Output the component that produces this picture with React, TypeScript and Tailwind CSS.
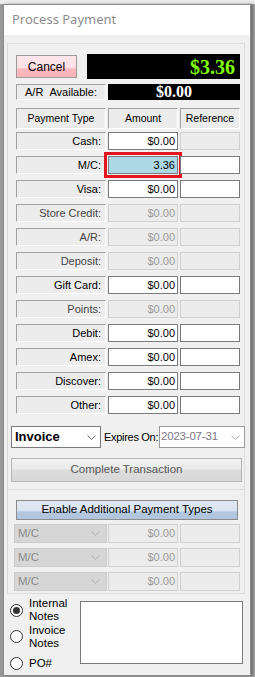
import React from 'react';

type Row = { label: string; amt: string; amtOn: boolean; refOn: boolean; focus?: boolean };

const rows: Row[] = [
  { label: 'Cash:', amt: '$0.00', amtOn: true, refOn: false },
  { label: 'M/C:', amt: '3.36', amtOn: true, refOn: true, focus: true },
  { label: 'Visa:', amt: '$0.00', amtOn: true, refOn: true },
  { label: 'Store Credit:', amt: '$0.00', amtOn: false, refOn: false },
  { label: 'A/R:', amt: '$0.00', amtOn: false, refOn: false },
  { label: 'Deposit:', amt: '$0.00', amtOn: false, refOn: false },
  { label: 'Gift Card:', amt: '$0.00', amtOn: true, refOn: true },
  { label: 'Points:', amt: '$0.00', amtOn: false, refOn: false },
  { label: 'Debit:', amt: '$0.00', amtOn: true, refOn: true },
  { label: 'Amex:', amt: '$0.00', amtOn: true, refOn: true },
  { label: 'Discover:', amt: '$0.00', amtOn: true, refOn: true },
  { label: 'Other:', amt: '$0.00', amtOn: true, refOn: true },
];

const Chevron = ({ color }: { color: string }) => (
  <svg width="9" height="5" viewBox="0 0 9 5" className="shrink-0">
    <polyline points="0.5,0.5 4.5,4.5 8.5,0.5" fill="none" stroke={color} strokeWidth="1" />
  </svg>
);

const Radio = ({ checked }: { checked?: boolean }) => (
  <div className="w-[13px] h-[13px] rounded-full border border-[#333] bg-white flex items-center justify-center shrink-0">
    {checked && <div className="w-[7px] h-[7px] rounded-full bg-[#333]" />}
  </div>
);

const labelBox =
  'border-t border-l border-[#a0a0a0] border-b border-r border-b-white border-r-white bg-[#ececec]';

export default function App() {
  return (
    <div className="w-[255px] h-[677px] overflow-hidden bg-[#a3a3a3] font-['Liberation_Sans',Arial,sans-serif] text-[11px] text-black">
      <div className="h-[4px] bg-[#ececec]" />
      <div className="flex">
        <div className="w-[3px] h-[673px] bg-[#9a9a9a]" />
        <div className="w-[248px] h-[672px] border border-[#8a8a8a] bg-[#f0f0f0] overflow-hidden shadow-[2px_0_3px_rgba(0,0,0,0.35)]">
          {/* title bar */}
          <div className="h-[30px] bg-white flex items-center pl-[8px] font-['Noto_Sans',sans-serif] text-[13px] text-[#8e8e8e]">
            Process Payment
          </div>

          {/* main group */}
          <div className="ml-[3px] mt-[8px] w-[238px] border-t border-l border-r border-[#dcdcdc] pt-[10px] pb-[7px]">
            <div className="flex items-start pl-[8px]">
              <button className="mt-[1px] w-[61px] h-[23px] border border-[#9a9a9a] bg-[linear-gradient(#ffe6ea_0%,#ffe0e5_55%,#ffb7be_62%,#ffb3bb_100%)] text-[12px] text-black">
                Cancel
              </button>
              <div className="ml-[10px] w-[153px] h-[25px] bg-black flex items-center justify-end pr-[5px] font-['Liberation_Serif',serif] font-bold text-[20px] text-[#80ff00]">
                $3.36
              </div>
            </div>

            <div className="flex mt-[5px] pl-[8px] gap-[2px]">
              <div className={`w-[90px] h-[16px] ${labelBox} flex items-center justify-center`}>A/R&nbsp;&nbsp;Available:</div>
              <div className="w-[132px] h-[16px] bg-black flex items-center justify-center font-['Liberation_Serif',serif] font-bold text-[16px] text-white">
                $0.00
              </div>
            </div>

            <div className="flex mt-[8px] pl-[8px] gap-[2px] text-[10.5px]">
              <div className={`w-[90px] h-[21px] ${labelBox} flex items-center justify-center`}>Payment Type</div>
              <div className={`w-[70px] h-[21px] ${labelBox} flex items-center justify-center`}>Amount</div>
              <div className={`w-[60px] h-[21px] ${labelBox} flex items-center justify-center`}>Reference</div>
            </div>

            <div className="mt-[3px] flex flex-col gap-[6px] pl-[8px]">
              {rows.map((r) => (
                <div key={r.label} className="flex gap-[2px] h-[18px]">
                  <div
                    className={`w-[90px] h-[18px] ${labelBox} flex items-center justify-end pr-[4px] ${
                      r.amtOn ? 'text-black' : 'text-[#444]'
                    }`}
                  >
                    {r.label}
                  </div>
                  <div
                    className={`w-[70px] h-[18px] flex items-center justify-end pr-[2px] border ${
                      r.focus
                        ? 'bg-[#add8e6] border-[#7a7a7a] outline-[3px] outline-solid outline-[#e3161f] outline-offset-[1px]'
                        : r.amtOn
                        ? 'bg-white border-[#7a7a7a] text-black'
                        : 'bg-[#ececec] border-[#cfcfcf] text-[#9a9a9a]'
                    }`}
                  >
                    {r.amt}
                  </div>
                  <div
                    className={`w-[60px] h-[18px] border ${
                      r.refOn ? 'bg-white border-[#7a7a7a]' : 'bg-[#ececec] border-[#cfcfcf]'
                    }`}
                  />
                </div>
              ))}
            </div>

            <div className="mt-[12px] flex items-center pl-[3px] h-[22px] w-[250px]">
              <div className="shrink-0 w-[90px] h-[22px] bg-white border border-[#7a7a7a] flex items-center justify-between pl-[3px] pr-[4px]">
                <span className="font-bold text-[13px] text-black">Invoice</span>
                <Chevron color="#666" />
              </div>
              <span className="shrink-0 ml-[3px] w-[55px] whitespace-nowrap text-[11px] tracking-[-0.3px] text-black">Expires On:</span>
              <div className="shrink-0 w-[86px] h-[22px] bg-white border border-[#9a9a9a] flex items-center justify-between pl-[1px] pr-[4px]">
                <span className="text-[11.5px] tracking-[-0.2px] text-[#7d7585]">2023-07-31</span>
                <Chevron color="#b0b0b0" />
              </div>
            </div>

            <button className="mt-[10px] ml-[3px] w-[231px] h-[24px] border border-[#b4b4b4] bg-[linear-gradient(#f2f2f2_0%,#ebebeb_45%,#dddddd_50%,#d8d8d8_100%)] text-[11.5px] text-[#555] flex items-center justify-center">
              Complete Transaction
            </button>
          </div>

          {/* additional payment group */}
          <div className="ml-[3px] w-[238px] border border-[#dcdcdc] pt-[10px] pb-[2px]">
            <button className="ml-[8px] w-[222px] h-[20px] border border-[#8c8c8c] bg-[linear-gradient(#dfe8f2_0%,#dae4ef_55%,#b3c7df_60%,#b0c4de_100%)] text-[11.5px] text-black flex items-center justify-center">
              Enable Additional Payment Types
            </button>
            <div className="mt-[4px] flex flex-col gap-[5px] pl-[6px]">
              {[0, 1, 2].map((i) => (
                <div key={i} className="flex h-[19px]">
                  <div className="w-[93px] h-[19px] bg-[#d6d6d6] border border-[#cccccc] flex items-center justify-between pl-[3px] pr-[6px] text-[11.5px] text-[#8a8a8a]">
                    <span>M/C</span>
                    <Chevron color="#b0b0b0" />
                  </div>
                  <div className="ml-[1px] w-[70px] h-[19px] bg-[#ececec] border border-[#cfcfcf] flex items-center justify-end pr-[2px] text-[#9a9a9a]">
                    $0.00
                  </div>
                  <div className="ml-[2px] w-[60px] h-[19px] bg-[#ececec] border border-[#cfcfcf]" />
                </div>
              ))}
            </div>
          </div>

          {/* notes */}
          <div className="flex">
            <div className="mt-[3px] ml-[6px] w-[70px] flex flex-col text-[11.5px] leading-[13px] text-black">
              <div className="h-[26px] flex items-center">
                <Radio checked />
                <div className="ml-[6px]">Internal<br />Notes</div>
              </div>
              <div className="h-[27px] flex items-center">
                <Radio />
                <div className="ml-[6px]">Invoice<br />Notes</div>
              </div>
              <div className="h-[27px] flex items-center">
                <Radio />
                <div className="ml-[6px]">PO#</div>
              </div>
            </div>
            <div className="mt-[7px] w-[163px] h-[63px] bg-white border border-[#7a7a7a]" />
          </div>
        </div>
      </div>
    </div>
  );
}
